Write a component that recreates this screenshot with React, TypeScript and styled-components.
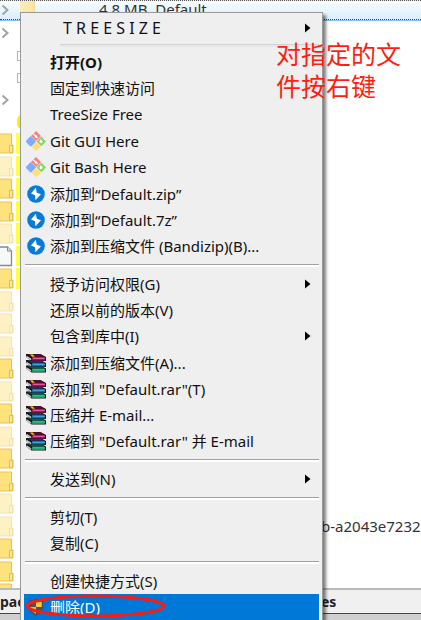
import React from 'react';
import styled, { createGlobalStyle } from 'styled-components';

const GlobalStyle = createGlobalStyle`
  * { box-sizing: border-box; }
  body { margin: 0; background: #fff; }
`;

const ui = '"Noto Sans", "Noto Sans CJK SC", sans-serif';

const Window = styled.div`
  position: relative;
  display: flex;
  flex-direction: column;
  height: 100vh;
  overflow: hidden;
  background: #fff;
  color: #333;
  font: 14px/20px ${ui};
`;

const FileRow = styled.div`
  display: flex;
  align-items: flex-start;
  flex: none;
  height: 21px;
  border-top: 1px dotted #555;
  border-bottom: 1px solid #7cc4ee;
  background: linear-gradient(#f8fcff, #d8eefb);
`;

const RowChevron = styled.span`
  display: flex;
  align-items: center;
  width: 20px;
  height: 18px;
  flex: none;
  box-sizing: content-box;
  border-bottom: 1px dotted #444;
`;

const RowFolder = styled.span`
  flex: none;
  width: 15px;
  height: 19px;
  background: linear-gradient(90deg, #f9eab8, #fbe7a2);
  border-right: 1px solid #edd795;
`;

const RowText = styled.span`
  flex: 1;
  height: 19px;
  padding-left: 64px;
  border-bottom: 1px dotted #444;
  white-space: pre;
  font-size: 15px;
  line-height: 16px;
`;

const Body = styled.div`
  display: flex;
  flex: 1;
  min-height: 0;
  overflow: hidden;
`;

const Tree = styled.div`
  display: flex;
  flex-direction: column;
  flex: none;
  width: 22px;
`;

const TreeLine = styled.div`
  display: flex;
  align-items: center;
  justify-content: space-between;
  flex: none;
  height: 22px;
  &:first-child { height: 24px; }
`;

const Box = styled.i`
  width: 5px;
  height: 10px;
  border: 1px solid #b4b4b4;
  border-right: 0;
`;

const YellowDot = styled.i`
  width: 5px;
  height: 14px;
  border-radius: 7px 0 0 7px;
  background: #fff200;
`;

const Node = styled.div<{ $marked: boolean }>`
  display: flex;
  justify-content: space-between;
  height: 22px;
  padding-bottom: 2px;
  flex: none;
  &:nth-child(odd) { height: 23px; }
  &::after {
    content: '';
    width: 6px;
    background: ${p => (p.$marked ? '#ffff45' : 'transparent')};
  }
`;

const Details = styled.div`
  display: flex;
  flex: 1;
  align-items: flex-end;
  justify-content: flex-end;
  overflow: hidden;
  padding-bottom: 52px;
  font-size: 15px;
`;

const HashText = styled.span`
  width: 100px;
  white-space: nowrap;
`;

const StatusBar = styled.div`
  display: flex;
  align-items: center;
  flex: none;
  height: 26px;
  border-top: 2px solid #b9b9c0;
  border-bottom: 1px solid #24506e;
  background: #f0f0f0;
  color: #222;
  font-weight: 700;
`;

const StatusCell = styled.span<{ $grow?: boolean }>`
  flex: ${p => (p.$grow ? '1' : '0 0 100px')};
`;

const Edge = styled.div`
  flex: none;
  height: 6px;
  background: #cfcfcf;
`;

const Menu = styled.ul`
  position: absolute;
  top: 12px;
  left: 20px;
  width: 303px;
  margin: 0;
  padding: 2px 3px;
  list-style: none;
  border: 1px solid #999;
  background: #efefef;
  box-shadow: 3px 3px 3px rgba(0, 0, 0, 0.5);
  font: 15px/26px ${ui};
  color: #111;
`;

const Group = styled.li`
  & + & { padding-top: 1px; }
`;

const Item = styled.button<{ $strong?: boolean; $active?: boolean; $title?: boolean }>`
  display: flex;
  align-items: center;
  width: 100%;
  height: 26px;
  padding: 0 8px 0 ${p => (p.$title ? '15px' : '2px')};
  border: 0;
  background: ${p => (p.$active ? '#0078d7' : 'transparent')};
  color: ${p => (p.$active ? '#fff' : 'inherit')};
  font: inherit;
  font-size: ${p => (p.$title ? '16px' : '15px')};
  font-weight: ${p => (p.$strong ? 700 : 400)};
  text-align: left;
  white-space: pre;
`;

const IconSlot = styled.span`
  display: flex;
  flex: none;
  width: 24px;
`;

const Label = styled.span`
  flex: 1;
`;

const Rule = styled.li<{ $short?: boolean }>`
  display: flex;
  align-items: center;
  height: ${p => (p.$short ? '8px' : '12px')};
  padding-left: ${p => (p.$short ? '36px' : '1px')};
  &::after {
    content: '';
    flex: 1;
    height: 2px;
    border-top: 1px solid ${p => (p.$short ? '#d2d2d2' : '#a0a0a0')};
    background: ${p => (p.$short ? '#e8e8e8' : '#fff')};
  }
`;

const Note = styled.p`
  position: absolute;
  top: 37px;
  left: 276px;
  width: 130px;
  margin: 0;
  color: #ff1d12;
  font: 25px/32px "Noto Sans CJK SC", sans-serif;
`;

const Ring = styled.svg`
  position: absolute;
  top: 593px;
  left: 24px;
`;

const Chevron = () => (
  <svg width="12" height="12" viewBox="0 0 12 12" fill="none" stroke="#a3a3a3" strokeWidth="2">
    <path d="M2.500 1.500 7.500 6 2.500 10.500" />
  </svg>
);

const Arrow = () => (
  <svg width="6" height="10" viewBox="0 0 6 10"><path d="M0 .5 5.5 5 0 9.500z" fill="#000" /></svg>
);

const GitIcon = () => (
  <svg width="20" height="20" viewBox="0 0 20 20">
    <path d="M10 0 15 5 10 10 5 5z" fill="#f58080" />
    <path d="M4.700 5.500 9.400 10.500 4.700 15.300 0 10.400z" fill="#80abf8" stroke="#80abf8" strokeLinejoin="round" />
    <path d="M15.300 5.500 20 10.400 15.300 15.300 10.500 10.500z" fill="#8bd36c" />
    <path d="M10 11 15 15.500 10 20 5 15.500z" fill="#ffe07c" />
    <path d="M7 2.500 11.500 7M15 8.500v3.500" stroke="#f0f0f0" strokeWidth="1.4" />
    <circle cx="10" cy="5.500" r="1.3" fill="#fff" />
    <circle cx="15" cy="10.500" r="1.5" fill="#fff" />
  </svg>
);

const ZipIcon = () => (
  <svg width="20" height="20" viewBox="0 0 20 20">
    <circle cx="10" cy="10" r="8.800" fill="#087bd8" />
    <path d="M9.800 3.800 5 9.400 9 11.200 9.400 16.200 15 10.300 10.800 8.700z" fill="#fff" />
  </svg>
);

const books: [string, string, string, number][] = [
  ['#085c3c', '#0e9a62', '#35d196', 12],
  ['#0b3c6c', '#1769a8', '#45a9e4', 6.5],
  ['#5f0a38', '#a3125c', '#ec5fb0', 0.5],
];

const RarIcon = () => (
  <svg width="21" height="20" viewBox="0 0 21 20">
    {books.map(([dark, base, light, y]) => (
      <g key={y} transform={`translate(0 ${y})`}>
        <path d="M0 .5H14.500L20 3.500V7.500H5.500L0 3.500z" fill="#1c1216" />
        <path d="M1 .8H14.300L19 3.300H5.500z" fill={dark} />
        <path d="M6 3.500H18.500Q20 5.200 18.500 7H6z" fill={base} />
        <path d="M7 4.300H18.800V5.400H7z" fill={light} />
        <path d="M.5 2.200 5.200 5.200V6.800L.5 4z" fill="#f4f4f4" />
        <path d="M.5 3.100 5.200 6" stroke="#8b8b8b" strokeWidth=".5" />
      </g>
    ))}
    <path d="M4 1.500 6.500 1.300 9 3.800H6z" fill="#d3bd18" />
  </svg>
);

const ShieldIcon = () => (
  <svg width="20" height="20" viewBox="0 0 20 20">
    <path d="M10 1c2 2 4 2 7 2v7c0 4-3 6-7 9-4-3-7-5-7-9V3c3 0 5 0 7-2z" fill="#4b5157" />
    <path d="M10 3.500c2 1 4 1.300 5.700 1.300V10H10z" fill="#ffc83d" />
    <path d="M4.300 10H10v7C7 15 4.600 13 4.300 10z" fill="#f6b42f" />
  </svg>
);

const FolderIcon = ({ pale }: { pale?: boolean }) => (
  <svg width="14" height="21" viewBox="0 0 14 21">
    <g opacity={pale ? 0.45 : 1}>
      <path d="M-1 1H11.500V12H13V20H-1z" fill="#fee27c" stroke="#e9c151" />
      <path d="M9.500 12.500H12.500V19.500H9.500z" fill="#ffe89f" stroke="#e5bc50" />
    </g>
  </svg>
);

const PageIcon = () => (
  <svg width="14" height="21" viewBox="0 0 14 21">
    <path d="M-1 1H7.500L11.500 5V19.500H-1z" fill="#f7f8fa" stroke="#888" strokeWidth="1.3" />
    <path d="M7.500 1V5H11.500" fill="#ddd" stroke="#888" />
  </svg>
);

type Entry = { text: string; icon?: React.ReactNode; strong?: boolean; sub?: boolean; active?: boolean };

const sections: Entry[][][] = [
  [
    [{ text: '打开(O)', strong: true }, { text: '固定到快速访问' }, { text: 'TreeSize Free' }],
    [{ text: 'Git GUI Here', icon: <GitIcon /> }, { text: 'Git Bash Here', icon: <GitIcon /> }],
    [
      { text: '添加到“Default.zip”', icon: <ZipIcon /> },
      { text: '添加到“Default.7z”', icon: <ZipIcon /> },
      { text: '添加到压缩文件 (Bandizip)(B)...', icon: <ZipIcon /> },
    ],
  ],
  [
    [{ text: '授予访问权限(G)', sub: true }, { text: '还原以前的版本(V)' }, { text: '包含到库中(I)', sub: true }],
    [
      { text: '添加到压缩文件(A)...', icon: <RarIcon /> },
      { text: '添加到 "Default.rar"(T)', icon: <RarIcon /> },
      { text: '压缩并 E-mail...', icon: <RarIcon /> },
      { text: '压缩到 "Default.rar" 并 E-mail', icon: <RarIcon /> },
    ],
  ],
  [[{ text: '发送到(N)', sub: true }]],
  [[{ text: '剪切(T)' }, { text: '复制(C)' }]],
  [[{ text: '创建快捷方式(S)' }, { text: '删除(D)', icon: <ShieldIcon />, active: true }]],
];

const nodes = 'SLSSLFSLLLSLSLSSLLSSS'.split('');

export default function App() {
  return (
    <Window>
      <GlobalStyle />
      <FileRow>
        <RowChevron><Chevron /></RowChevron>
        <RowFolder />
        <RowText>4.8 MB  Default</RowText>
      </FileRow>
      <Body>
        <Tree>
          <TreeLine><Chevron /></TreeLine>
          <TreeLine><span /><Box /></TreeLine>
          <TreeLine><span /><Box /></TreeLine>
          <TreeLine><Chevron /></TreeLine>
          <TreeLine><span /><YellowDot /></TreeLine>
          <div>
            {nodes.map((kind, i) => (
              <Node key={i} $marked={i < 7}>
                {kind === 'F' ? <PageIcon /> : <FolderIcon pale={kind === 'L'} />}
              </Node>
            ))}
          </div>
        </Tree>
        <Details><HashText>b-a2043e7232</HashText></Details>
      </Body>
      <StatusBar>
        <StatusCell $grow>pace</StatusCell>
        <StatusCell>es</StatusCell>
      </StatusBar>
      <Edge />
      <Menu>
        <li>
          <Item $title>
            <IconSlot />
            <Label>T R E E S I Z E</Label>
            <Arrow />
          </Item>
        </li>
        {sections.map((groups, s) => (
          <React.Fragment key={s}>
            <Rule $short={s === 0} />
            {groups.map((entries, g) => (
              <Group key={g}>
                {entries.map(e => (
                  <Item key={e.text} $strong={e.strong} $active={e.active}>
                    <IconSlot>{e.icon}</IconSlot>
                    <Label>{e.text}</Label>
                    {e.sub && <Arrow />}
                  </Item>
                ))}
              </Group>
            ))}
          </React.Fragment>
        ))}
      </Menu>
      <Note>对指定的文件按右键</Note>
      <Ring width="144" height="26" viewBox="0 0 144 26" fill="none">
        <ellipse cx="71.500" cy="13" rx="68.500" ry="10" stroke="#fb1b12" strokeWidth="3" />
      </Ring>
    </Window>
  );
}
